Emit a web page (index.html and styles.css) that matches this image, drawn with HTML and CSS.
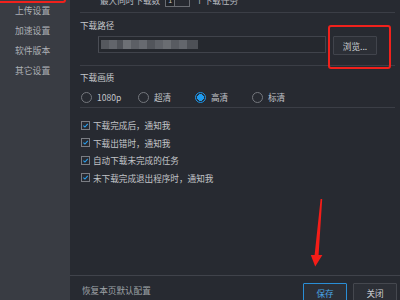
FILE: index.html
```html
<!DOCTYPE html>
<html lang="zh-CN">
<head>
<meta charset="utf-8">
<link rel="stylesheet" href="styles.css">
</head>
<body>
<div class="sidebar">
  <div class="nav-item">上传设置</div>
  <div class="nav-item">加速设置</div>
  <div class="nav-item">软件版本</div>
  <div class="nav-item">其它设置</div>
</div>
<div class="main">
  <div class="content">
    <div class="section top-row">
      <span class="top-text">最大同时下载数</span>
      <span class="spin"><span class="spin-val">1</span><span class="spin-btn"></span></span>
      <span class="top-text">个下载任务</span>
    </div>
    <div class="section path-section">
      <div class="label">下载路径</div>
      <div class="path-row">
        <div class="path-input"><span class="blur-path"></span></div>
        <button class="btn browse">浏览...</button>
      </div>
    </div>
    <div class="section quality-section">
      <div class="label">下载画质</div>
      <div class="radio-row">
        <label class="radio"><span class="dot"></span>1080p</label>
        <label class="radio"><span class="dot"></span>超清</label>
        <label class="radio checked"><span class="dot"></span>高清</label>
        <label class="radio"><span class="dot"></span>标清</label>
      </div>
    </div>
    <div class="checks">
      <label class="check"><span class="box"><svg viewBox="0 0 9 9"><path d="M1.8 4.6 L3.8 6.5 L7.4 2.4" /></svg></span>下载完成后，通知我</label>
      <label class="check"><span class="box"><svg viewBox="0 0 9 9"><path d="M1.8 4.6 L3.8 6.5 L7.4 2.4" /></svg></span>下载出错时，通知我</label>
      <label class="check"><span class="box"><svg viewBox="0 0 9 9"><path d="M1.8 4.6 L3.8 6.5 L7.4 2.4" /></svg></span>自动下载未完成的任务</label>
      <label class="check"><span class="box"><svg viewBox="0 0 9 9"><path d="M1.8 4.6 L3.8 6.5 L7.4 2.4" /></svg></span>未下载完成退出程序时，通知我</label>
    </div>
  </div>
  <div class="footer">
    <span class="reset">恢复本页默认配置</span>
    <div class="footer-btns">
      <button class="btn save">保存</button>
      <button class="btn close">关闭</button>
    </div>
  </div>
</div>
<svg class="annot" width="400" height="300" viewBox="0 0 400 300">
  <rect x="-5" y="-20" width="70" height="22" rx="2" fill="none" stroke="#f0211c" stroke-width="2"/>
  <rect x="329" y="26" width="61" height="42" rx="2" fill="none" stroke="#f0211c" stroke-width="2"/>
  <polygon points="320.6,199 322.2,199 318.6,255 322.4,255 315.2,266.5 310.8,255 314.6,255" fill="#f41d18"/>
</svg>
</body>
</html>
```
FILE: styles.css
```css
* { box-sizing: border-box; }
html, body { margin: 0; padding: 0; }
body {
  width: 400px;
  height: 300px;
  overflow: hidden;
  display: flex;
  position: relative;
  background: #272a31;
  font-family: "Noto Sans CJK SC", "Noto Sans", sans-serif;
  font-size: 8.6px;
  color: #c3c5c9;
}
.sidebar {
  width: 70px;
  flex: none;
  background: #393c43;
  padding-top: 1px;
}
.nav-item {
  height: 20px;
  line-height: 20px;
  padding-left: 15px;
  color: #adb0b5;
  font-size: 8.8px;
}
.main {
  flex: 1;
  display: flex;
  flex-direction: column;
  background: #272a31;
}
.content {
  flex: 1;
  padding: 0 5px 0 10px;
}
.section { border-bottom: 1px solid #3b3e46; }
.top-row {
  margin-top: -13px;
  height: 26px;
  display: flex;
  align-items: center;
  padding-left: 20px;
  gap: 5px;
}
.top-text { color: #b9bcc1; }
.spin {
  display: flex;
  width: 25px;
  height: 14px;
  border: 1px solid #6a6d73;
}
.spin-val {
  width: 8px;
  line-height: 12px;
  font-size: 7px;
  text-align: center;
  background: #1f2227;
}
.spin-btn {
  flex: 1;
  border-left: 1px solid #6a6d73;
}
.label {
  line-height: 12px;
  color: #c6c8cc;
}
.path-section {
  height: 53px;
  padding-top: 6px;
}
.path-row {
  display: flex;
  align-items: flex-start;
  margin-top: 5px;
  padding-left: 18px;
  gap: 7px;
}
.path-input {
  width: 228px;
  height: 17px;
  border: 1px solid #40434b;
  border-left-color: #4a4d55;
  background: #25282e;
  padding: 3px 0 0 2px;
}
.blur-path {
  display: block;
  width: 97px;
  height: 9px;
  background: linear-gradient(90deg,
    #55585e 0 8px, #62656b 8px 16px, #4f5258 16px 22px, #6d7075 22px 30px,
    #5c5f65 30px 38px, #676a70 38px 46px, #52555b 46px 54px, #5f6268 54px 62px,
    #6a6d72 62px 70px, #585b61 70px 78px, #63666c 78px 86px, #4d5056 86px 97px);
}
.btn {
  font-family: inherit;
  font-size: 8.6px;
  color: #cfd1d5;
  background: #2c2f36;
  border: 1px solid #41444c;
  padding: 0;
  border-radius: 1px;
}
.browse {
  width: 44px;
  height: 19px;
}
.quality-section {
  height: 42px;
  padding-top: 5px;
}
.radio-row {
  display: flex;
  margin-top: 8px;
  padding-left: 1px;
  height: 12px;
  align-items: center;
}
.radio {
  width: 57px;
  display: flex;
  align-items: center;
  gap: 5px;
  color: #c3c5c9;
}
.dot {
  width: 11px;
  height: 11px;
  border-radius: 50%;
  border: 1px solid #74777d;
  flex: none;
}
.radio.checked .dot {
  border-color: #1d95e8;
  background: radial-gradient(circle, #1f9cf0 0 3.3px, #272a31 3.6px);
}
.checks { padding-top: 8.5px; }
.check {
  display: flex;
  align-items: center;
  height: 17.5px;
  padding-left: 1px;
  gap: 3px;
  color: #c3c5c9;
}
.box {
  width: 9px;
  height: 9px;
  border: 1px solid #7a7d83;
  flex: none;
  display: flex;
}
.box svg {
  width: 7px;
  height: 7px;
}
.box path {
  fill: none;
  stroke: #2aa2f2;
  stroke-width: 1.4;
}
.footer {
  height: 25px;
  border-top: 1px solid #40434b;
  display: flex;
  align-items: flex-start;
  justify-content: space-between;
  flex: none;
}
.reset {
  margin-left: 12px;
  margin-top: 8px;
  line-height: 12px;
  color: #9fa2a7;
}
.footer-btns {
  display: flex;
  gap: 6px;
  margin-top: 7px;
  margin-right: 3px;
}
.save, .close {
  width: 44px;
  height: 20px;
}
.save {
  border-color: #2a8ed6;
  color: #4aa6e6;
}
.close { border-color: #45484f; }
.annot {
  position: absolute;
  left: 0;
  top: 0;
  pointer-events: none;
}
```
